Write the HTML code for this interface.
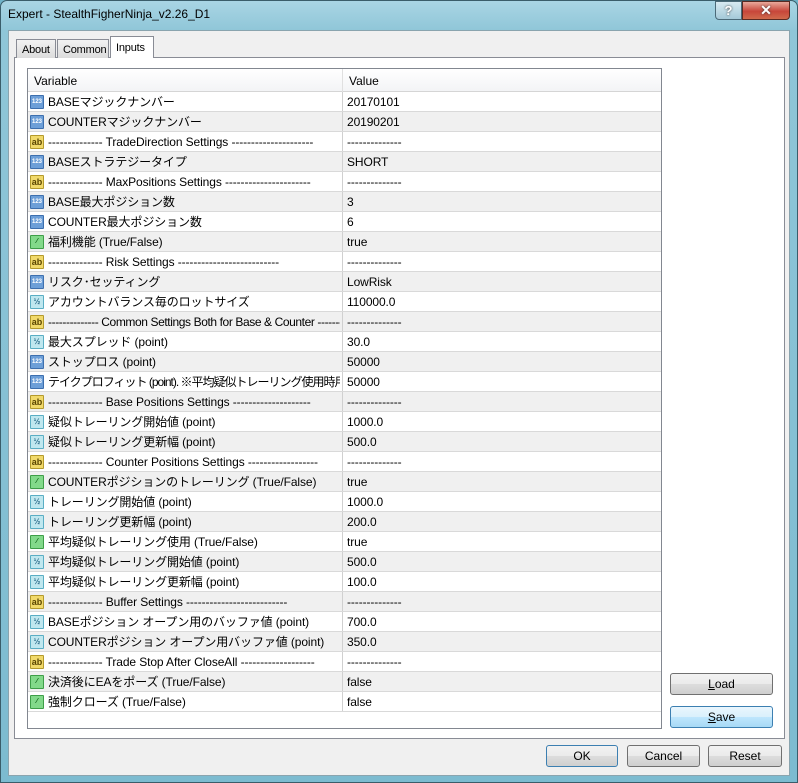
<!DOCTYPE html>
<html><head><meta charset="utf-8"><style>
*{box-sizing:border-box;margin:0;padding:0}
body{width:798px;height:783px;overflow:hidden;background:#6fb3c9;font-family:"Liberation Sans","Noto Sans CJK JP",sans-serif;font-size:12px;color:#000;position:relative}
.frame{position:absolute;left:0;top:0;width:798px;height:783px;background:linear-gradient(180deg,#a9d5e4 0,#8fc6d8 30px,#7cbbd0 100%);border:1px solid #3a5d6a;border-radius:7px 7px 0 0}
.title{position:absolute;left:8px;top:7px;font-size:12px;color:#000}
.client{position:absolute;left:8px;top:30px;width:782px;height:746px;background:#f0f0f0;border:1px solid #8aa4ae}
.abs{position:absolute}
.tab{position:absolute;top:39px;height:19px;border:1px solid #898c95;border-bottom:none;background:linear-gradient(#f2f2f2,#dcdcdc);font-size:11px;line-height:14px;padding:3px 0 0 5px;letter-spacing:-0.2px}
.panel{position:absolute;left:14px;top:57px;width:771px;height:682px;background:#fff;border:1px solid #898c95}
.tbl{position:absolute;left:27px;top:68px;width:635px;height:661px;border:1px solid #828790;background:#fff;overflow:hidden}
.hdr{position:absolute;left:0;top:0;width:633px;height:23px;background:linear-gradient(#fff,#f3f4f6);border-bottom:1px solid #d5d5d5}
.hdr span{position:absolute;top:5px;line-height:14px}
.row{position:absolute;left:0;width:633px;height:20px;border-bottom:1px solid #d9d9d9;line-height:14px;letter-spacing:-0.1px}
.row.g{background:#f0f0f0}
.row .n{position:absolute;left:20px;top:3px;white-space:nowrap;max-width:292px;overflow:hidden}
.row .v{position:absolute;left:314px;top:0;height:19px;border-left:1px solid #d0d0d0;padding:3px 0 0 4px;white-space:nowrap}
.ic{position:absolute;left:2px;top:3px;width:14px;height:14px;font-size:7px;font-weight:bold;text-align:center;line-height:12px;border-radius:1px;letter-spacing:0}
.i1{background:#6d9fd8;border:1px solid #3d6fae;color:#fff;font-size:6px}
.ia{background:#f1d96a;border:1px solid #b49a2c;color:#5a4500;font-size:9px}
.ih{background:#bfe7ef;border:1px solid #5aaec4;color:#2a6b8a;font-size:8px}
.ib{background:#82d98a;border:1px solid #3e9e48;color:#0b5a14}
.btn{position:absolute;height:22px;border:1px solid #707070;border-radius:3px;background:linear-gradient(#f2f2f2 0,#ebebeb 50%,#dddddd 51%,#cfcfcf 100%);text-align:center;line-height:20px;font-size:12px}
.btn.blue{border-color:#3c7fb1;background:linear-gradient(#eaf6fd 0,#d9f0fc 50%,#bee6fd 51%,#a7d9f5 100%)}
</style></head><body>
<div class="frame"></div>
<div class="title">Expert - StealthFigherNinja_v2.26_D1</div>
<div class="abs" style="left:715px;top:1px;width:27px;height:19px;border:1px solid #4b6a78;border-radius:0 0 0 4px;background:linear-gradient(#d7eaf1,#a4c9d8);color:#fff;text-align:center;font-weight:bold;font-size:13px;line-height:17px;text-shadow:0 0 2px #333">?</div>
<div class="abs" style="left:742px;top:1px;width:48px;height:19px;border:1px solid #5a2a22;border-radius:0 0 4px 0;background:linear-gradient(#e9a99b,#c7463a 55%,#d06a4c);color:#fff;text-align:center;font-weight:bold;font-size:14px;line-height:17px;text-shadow:0 0 2px #333">✕</div>
<div class="client"></div>
<div class="panel"></div>
<div class="tab" style="left:16px;width:40px">About</div>
<div class="tab" style="left:57px;width:52px">Common</div>
<div class="tab" style="left:110px;top:36px;height:22px;width:44px;background:#fff;padding-top:4px">Inputs</div>
<div class="tbl">
<div class="hdr"><span style="left:6px">Variable</span><span style="left:321px">Value</span><div style="position:absolute;left:314px;top:0;height:23px;border-left:1px solid #e0e0e0"></div></div>
</div>
<div class="btn" style="left:670px;top:673px;width:103px"><u>L</u>oad</div>
<div class="btn blue" style="left:670px;top:706px;width:103px"><u>S</u>ave</div>
<div class="btn" style="left:546px;top:745px;width:72px;border-color:#3c7fb1">OK</div>
<div class="btn" style="left:627px;top:745px;width:73px">Cancel</div>
<div class="btn" style="left:708px;top:745px;width:74px">Reset</div>
<div style="position:absolute;left:28px;top:92px;width:633px">
<div class="row" style="top:0"><div class="ic i1">123</div><span class="n">BASEマジックナンバー</span><span class="v">20170101</span></div>
<div class="row g" style="top:20px"><div class="ic i1">123</div><span class="n">COUNTERマジックナンバー</span><span class="v">20190201</span></div>
<div class="row" style="top:40px"><div class="ic ia">ab</div><span class="n">-------------- TradeDirection Settings ---------------------</span><span class="v">--------------</span></div>
<div class="row g" style="top:60px"><div class="ic i1">123</div><span class="n">BASEストラテジータイプ</span><span class="v">SHORT</span></div>
<div class="row" style="top:80px"><div class="ic ia">ab</div><span class="n">-------------- MaxPositions Settings ----------------------</span><span class="v">--------------</span></div>
<div class="row g" style="top:100px"><div class="ic i1">123</div><span class="n">BASE最大ポジション数</span><span class="v">3</span></div>
<div class="row" style="top:120px"><div class="ic i1">123</div><span class="n">COUNTER最大ポジション数</span><span class="v">6</span></div>
<div class="row g" style="top:140px"><div class="ic ib">⁄</div><span class="n">福利機能 (True/False)</span><span class="v">true</span></div>
<div class="row" style="top:160px"><div class="ic ia">ab</div><span class="n">-------------- Risk Settings --------------------------</span><span class="v">--------------</span></div>
<div class="row g" style="top:180px"><div class="ic i1">123</div><span class="n">リスク･セッティング</span><span class="v">LowRisk</span></div>
<div class="row" style="top:200px"><div class="ic ih">½</div><span class="n">アカウントバランス毎のロットサイズ</span><span class="v">110000.0</span></div>
<div class="row g" style="top:220px"><div class="ic ia">ab</div><span class="n" style="letter-spacing:-0.4px">-------------- Common Settings Both for Base &amp; Counter -------</span><span class="v">--------------</span></div>
<div class="row" style="top:240px"><div class="ic ih">½</div><span class="n">最大スプレッド (point)</span><span class="v">30.0</span></div>
<div class="row g" style="top:260px"><div class="ic i1">123</div><span class="n">ストップロス (point)</span><span class="v">50000</span></div>
<div class="row" style="top:280px"><div class="ic i1">123</div><span class="n" style="letter-spacing:-1px">テイクプロフィット (point). ※平均疑似トレーリング使用時用</span><span class="v">50000</span></div>
<div class="row g" style="top:300px"><div class="ic ia">ab</div><span class="n">-------------- Base Positions Settings --------------------</span><span class="v">--------------</span></div>
<div class="row" style="top:320px"><div class="ic ih">½</div><span class="n">疑似トレーリング開始値 (point)</span><span class="v">1000.0</span></div>
<div class="row g" style="top:340px"><div class="ic ih">½</div><span class="n">疑似トレーリング更新幅 (point)</span><span class="v">500.0</span></div>
<div class="row" style="top:360px"><div class="ic ia">ab</div><span class="n">-------------- Counter Positions Settings ------------------</span><span class="v">--------------</span></div>
<div class="row g" style="top:380px"><div class="ic ib">⁄</div><span class="n">COUNTERポジションのトレーリング (True/False)</span><span class="v">true</span></div>
<div class="row" style="top:400px"><div class="ic ih">½</div><span class="n">トレーリング開始値 (point)</span><span class="v">1000.0</span></div>
<div class="row g" style="top:420px"><div class="ic ih">½</div><span class="n">トレーリング更新幅 (point)</span><span class="v">200.0</span></div>
<div class="row" style="top:440px"><div class="ic ib">⁄</div><span class="n">平均疑似トレーリング使用 (True/False)</span><span class="v">true</span></div>
<div class="row g" style="top:460px"><div class="ic ih">½</div><span class="n">平均疑似トレーリング開始値 (point)</span><span class="v">500.0</span></div>
<div class="row" style="top:480px"><div class="ic ih">½</div><span class="n">平均疑似トレーリング更新幅 (point)</span><span class="v">100.0</span></div>
<div class="row g" style="top:500px"><div class="ic ia">ab</div><span class="n">-------------- Buffer Settings --------------------------</span><span class="v">--------------</span></div>
<div class="row" style="top:520px"><div class="ic ih">½</div><span class="n">BASEポジション オープン用のバッファ値 (point)</span><span class="v">700.0</span></div>
<div class="row g" style="top:540px"><div class="ic ih">½</div><span class="n">COUNTERポジション オープン用バッファ値 (point)</span><span class="v">350.0</span></div>
<div class="row" style="top:560px"><div class="ic ia">ab</div><span class="n">-------------- Trade Stop After CloseAll -------------------</span><span class="v">--------------</span></div>
<div class="row g" style="top:580px"><div class="ic ib">⁄</div><span class="n">決済後にEAをポーズ (True/False)</span><span class="v">false</span></div>
<div class="row" style="top:600px"><div class="ic ib">⁄</div><span class="n">強制クローズ (True/False)</span><span class="v">false</span></div>
</div>
</body></html>
